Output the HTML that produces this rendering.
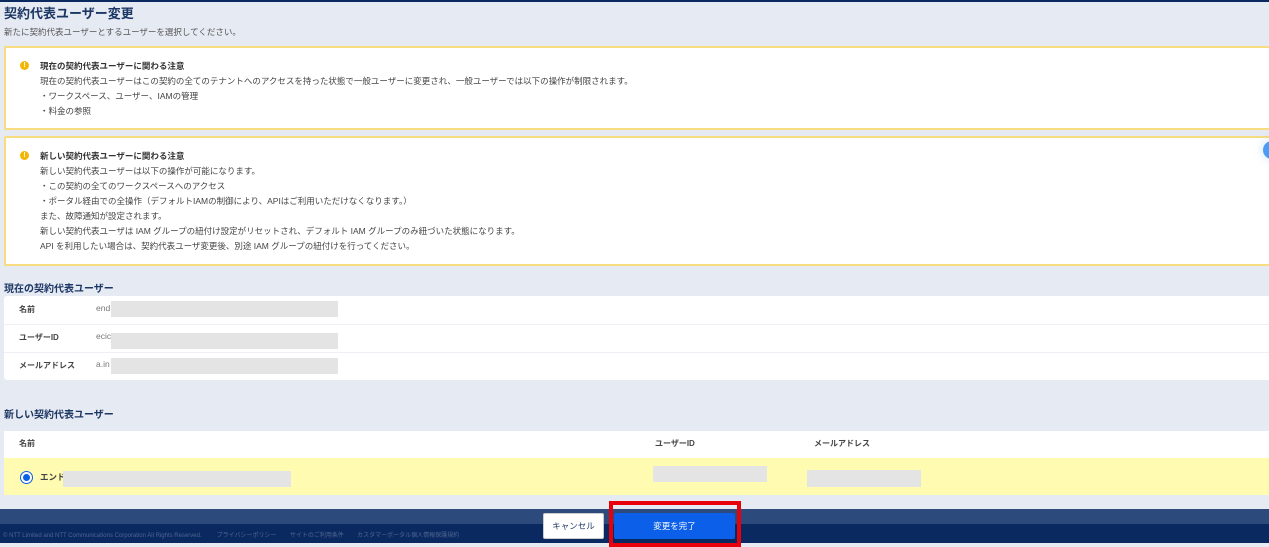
<!DOCTYPE html>
<html><head><meta charset="utf-8"><style>
*{margin:0;padding:0;box-sizing:border-box}
body{width:1269px;height:547px;overflow:hidden;background:#e6eaf3;font-family:"Liberation Sans","Noto Sans CJK JP",sans-serif;color:#444;position:relative}
.a{position:absolute;white-space:nowrap}
.t{font-size:8.5px;line-height:15px}
.box{position:absolute;left:4px;width:1280px;background:#fff;border:2px solid #f7dc80;border-radius:2px}
.ic{position:absolute;width:9px;height:9px;border-radius:50%;background:#f2b705;color:#fff;font-size:7px;font-weight:bold;line-height:9px;text-align:center}
.g{position:absolute;background:#e4e4e4}
.h{font-size:10px;font-weight:bold;color:#1d3765}
.lb{font-size:8px;font-weight:bold;color:#444}
</style></head><body>
<div class="a" style="left:0;top:0;width:1269px;height:2px;background:#0b2961"></div>
<div class="a" style="left:4px;top:3px;font-size:13px;font-weight:bold;color:#1d3765">契約代表ユーザー変更</div>
<div class="a t" style="left:4px;top:25px;color:#555">新たに契約代表ユーザーとするユーザーを選択してください。</div>

<div class="box" style="top:46px;height:84px"></div>
<div class="ic" style="left:20px;top:61px">!</div>
<div class="a t" style="left:40px;top:59px;font-weight:bold;color:#333">現在の契約代表ユーザーに関わる注意</div>
<div class="a t" style="left:40px;top:74px">現在の契約代表ユーザーはこの契約の全てのテナントへのアクセスを持った状態で一般ユーザーに変更され、一般ユーザーでは以下の操作が制限されます。<br>・ワークスペース、ユーザー、IAMの管理<br>・料金の参照</div>

<div class="box" style="top:136px;height:130px"></div>
<div class="ic" style="left:20px;top:151px">!</div>
<div class="a t" style="left:40px;top:149px;font-weight:bold;color:#333">新しい契約代表ユーザーに関わる注意</div>
<div class="a t" style="left:40px;top:164px">新しい契約代表ユーザーは以下の操作が可能になります。<br>・この契約の全てのワークスペースへのアクセス<br>・ポータル経由での全操作（デフォルトIAMの制御により、APIはご利用いただけなくなります。）<br>また、故障通知が設定されます。<br>新しい契約代表ユーザは IAM グループの紐付け設定がリセットされ、デフォルト IAM グループのみ紐づいた状態になります。<br>API を利用したい場合は、契約代表ユーザ変更後、別途 IAM グループの紐付けを行ってください。</div>
<div class="a" style="left:1263px;top:141px;width:18px;height:18px;border-radius:50%;background:#4a9cf5;box-shadow:0 0 10px rgba(74,156,245,.3)"></div>

<div class="a h" style="left:4px;top:280px">現在の契約代表ユーザー</div>
<div class="a" style="left:4px;top:296px;width:1280px;height:84px;background:#fff;border-radius:3px"></div>
<div class="a" style="left:4px;top:324px;width:1280px;height:1px;background:#eef0f5"></div>
<div class="a" style="left:4px;top:352px;width:1280px;height:1px;background:#eef0f5"></div>
<div class="a lb" style="left:19px;top:304px">名前</div>
<div class="a lb" style="left:19px;top:332px">ユーザーID</div>
<div class="a lb" style="left:19px;top:360px">メールアドレス</div>
<div class="a t" style="left:96px;top:301px;color:#777">end</div>
<div class="a t" style="left:96px;top:329px;color:#777">ecic</div>
<div class="a t" style="left:96px;top:357px;color:#777">a.in</div>
<div class="g" style="left:111px;top:301px;width:227px;height:16px"></div>
<div class="g" style="left:111px;top:333px;width:227px;height:16px"></div>
<div class="g" style="left:111px;top:358px;width:227px;height:16px"></div>

<div class="a h" style="left:4px;top:406px">新しい契約代表ユーザー</div>
<div class="a" style="left:4px;top:431px;width:1280px;height:27px;background:#fff"></div>
<div class="a" style="left:4px;top:458px;width:1280px;height:37px;background:#fffbb0"></div>
<div class="a lb" style="left:19px;top:438px">名前</div>
<div class="a lb" style="left:655px;top:438px">ユーザーID</div>
<div class="a lb" style="left:814px;top:438px">メールアドレス</div>
<div class="a" style="left:20px;top:471px;width:13px;height:13px;border-radius:50%;border:1.5px solid #0b5fe8;background:#fff"></div>
<div class="a" style="left:23px;top:474px;width:7px;height:7px;border-radius:50%;background:#0b5fe8"></div>
<div class="a lb" style="left:40px;top:471px;font-size:8.5px">エンド</div>
<div class="g" style="left:63px;top:471px;width:228px;height:16px"></div>
<div class="g" style="left:653px;top:466px;width:114px;height:16px"></div>
<div class="g" style="left:807px;top:470px;width:114px;height:17px"></div>

<div class="a" style="left:0;top:509px;width:1269px;height:15px;background:#2c4a7b"></div>
<div class="a" style="left:0;top:524px;width:1269px;height:19px;background:#0b2961"></div>
<div class="a" style="left:3px;top:530px;font-size:6px;color:#4d6590">© NTT Limited and NTT Communications Corporation All Rights Reserved. &nbsp;&nbsp;&nbsp;&nbsp;&nbsp;&nbsp;&nbsp; プライバシーポリシー &nbsp;&nbsp;&nbsp;&nbsp;&nbsp;&nbsp; サイトのご利用条件 &nbsp;&nbsp;&nbsp;&nbsp;&nbsp;&nbsp; カスタマーポータル個人情報保護規約</div>
<div class="a" style="left:543px;top:513px;width:61px;height:26px;background:#fff;border:1px solid #ccc;border-radius:2px;font-size:8.5px;line-height:24px;text-align:center;color:#1d3765">キャンセル</div>
<div class="a" style="left:614px;top:513px;width:121px;height:26px;background:#0b5fe8;border-radius:2px;font-size:8.5px;line-height:26px;text-align:center;color:#fff">変更を完了</div>
<div class="a" style="left:609px;top:501px;width:132px;height:46px;border:4px solid #e8000b"></div>
</body></html>
